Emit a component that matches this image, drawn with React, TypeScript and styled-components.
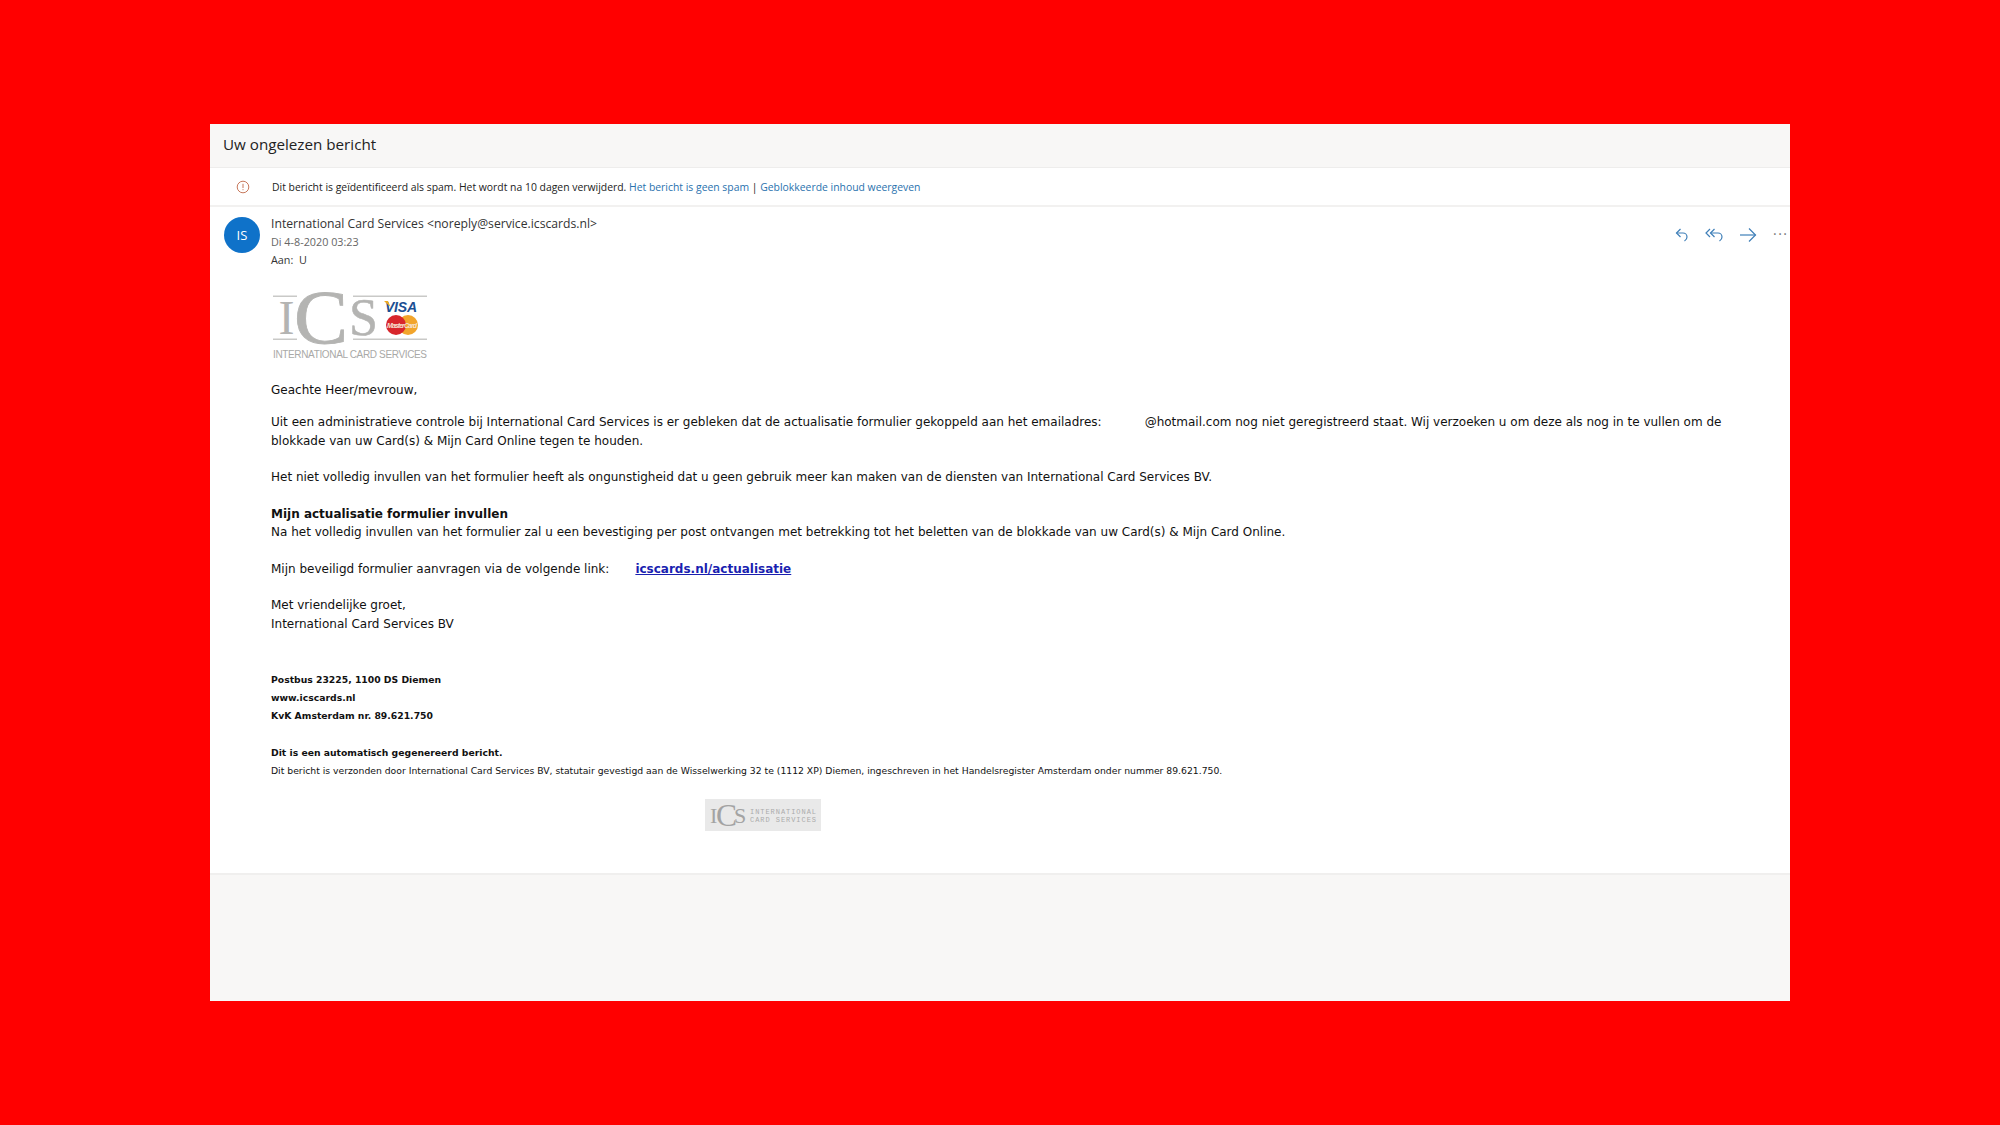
import styled, { createGlobalStyle } from "styled-components";

const GlobalStyle = createGlobalStyle`
    html, body {
        margin: 0;
        padding: 0;
        background: #ff0000;
    }
`

const UI_FONT = `"Open Sans", "Noto Sans", "Liberation Sans", sans-serif`;
const MAIL_FONT = `"DejaVu Sans", Verdana, sans-serif`;

function IcsLogo() {
    return (
        <svg width="160" height="74" viewBox="0 0 160 74">
            <rect x="2" y="6.5" width="24" height="1.5" fill="#c9c9c7" />
            <rect x="82" y="6.5" width="74" height="1.5" fill="#c9c9c7" />
            <rect x="2" y="49.5" width="24" height="1.5" fill="#c9c9c7" />
            <rect x="82" y="49.5" width="74" height="1.5" fill="#c9c9c7" />
            <text x="7.5" y="45" fontFamily="Liberation Serif, serif" fontSize="48" fill="#b4b4b2">I</text>
            <text x="23" y="54" fontFamily="Liberation Serif, serif" fontSize="76" fill="#b4b4b2" stroke="#b4b4b2" strokeWidth="0.8" textLength="54" lengthAdjust="spacingAndGlyphs">C</text>
            <text x="78" y="46" fontFamily="Liberation Serif, serif" fontSize="52" fill="#b4b4b2" stroke="#b4b4b2" strokeWidth="0.5">S</text>
            <text x="114" y="23" fontFamily="Liberation Sans, sans-serif" fontSize="14" fontWeight="700" fontStyle="italic" fill="#1b4f93" textLength="32">VISA</text>
            <path d="M113 12 l4 0 l2.5 6 z" fill="#eea91f" />
            <circle cx="137" cy="36" r="10" fill="#f2a52c" />
            <circle cx="125" cy="36" r="10" fill="#d8262c" />
            <text x="131" y="38.5" fontFamily="Liberation Sans, sans-serif" fontSize="7" fontWeight="700" fontStyle="italic" fill="#f6e2d0" textAnchor="middle" textLength="30">MasterCard</text>
            <text x="2" y="69" fontFamily="Liberation Sans, sans-serif" fontSize="10" fill="#a9a9a7" textLength="154">INTERNATIONAL CARD SERVICES</text>
        </svg>
    );
}

function SmallIcsLogo() {
    return (
        <svg width="116" height="32" viewBox="0 0 116 32">
            <text x="5" y="24" fontFamily="Liberation Serif, serif" fontSize="22" fill="#a3a3a3">I</text>
            <text x="11" y="27" fontFamily="Liberation Serif, serif" fontSize="32" fill="#a3a3a3" textLength="21" lengthAdjust="spacingAndGlyphs">C</text>
            <text x="29" y="24" fontFamily="Liberation Serif, serif" fontSize="22" fill="#a3a3a3">S</text>
            <text x="45" y="14.5" fontFamily="Liberation Mono, monospace" fontSize="7" fill="#ababab" textLength="66">INTERNATIONAL</text>
            <text x="45" y="22.5" fontFamily="Liberation Mono, monospace" fontSize="7" fill="#ababab" textLength="66">CARD SERVICES</text>
        </svg>
    );
}

function ReplyIcon() {
    return (
        <svg width="22" height="22" viewBox="0 0 22 22" fill="none" stroke="#3f7fb8" strokeWidth="1.2">
            <path d="M9.5 5 L5.5 9 L9.5 13" />
            <path d="M5.5 9 H12 a4 4 0 0 1 4 4 c0 2-1 3-2.5 4" />
        </svg>
    );
}

function ReplyAllIcon() {
    return (
        <svg width="22" height="22" viewBox="0 0 22 22" fill="none" stroke="#3f7fb8" strokeWidth="1.2">
            <path d="M6 5 L2 9 L6 13" />
            <path d="M10.5 5 L6.5 9 L10.5 13" />
            <path d="M6.5 9 H14 a4 4 0 0 1 4 4 c0 2-1 3-2.5 4" />
        </svg>
    );
}

function ForwardIcon() {
    return (
        <svg width="22" height="22" viewBox="0 0 22 22" fill="none" stroke="#3f7fb8" strokeWidth="1.2">
            <path d="M3 11 H18.5" />
            <path d="M12 4.5 L18.5 11 L12 17.5" />
        </svg>
    );
}

function InfoIcon() {
    return (
        <svg width="14" height="14" viewBox="0 0 14 14" fill="none" stroke="#c8795c" strokeWidth="1">
            <circle cx="7" cy="7" r="5.8" />
            <path d="M7 3.8 V8" />
            <path d="M7 9.2 V10.2" />
        </svg>
    );
}

export default function App() {
    return (
        <>
            <GlobalStyle />
            <PageStyled>
                <CardStyled>
                    <SubjectBarStyled>Uw ongelezen bericht</SubjectBarStyled>
                    <SpamBarStyled>
                        <SpamIconStyled><InfoIcon /></SpamIconStyled>
                        <span>
                            Dit bericht is geïdentificeerd als spam. Het wordt na 10 dagen verwijderd.{" "}
                            <SpamLinkStyled>Het bericht is geen spam</SpamLinkStyled> | <SpamLinkStyled>Geblokkeerde inhoud weergeven</SpamLinkStyled>
                        </span>
                    </SpamBarStyled>
                    <MessageStyled>
                        <SenderRowStyled>
                            <AvatarStyled>IS</AvatarStyled>
                            <SenderInfoStyled>
                                <SenderNameStyled>International Card Services &lt;noreply@service.icscards.nl&gt;</SenderNameStyled>
                                <SentDateStyled>Di 4-8-2020 03:23</SentDateStyled>
                                <RecipientStyled>Aan:&nbsp; U</RecipientStyled>
                            </SenderInfoStyled>
                            <ActionsStyled>
                                <ReplyIcon />
                                <ReplyAllIcon />
                                <ForwardIcon />
                                <MoreStyled>···</MoreStyled>
                            </ActionsStyled>
                        </SenderRowStyled>
                        <BodyStyled>
                            <LogoWrapperStyled><IcsLogo /></LogoWrapperStyled>
                            <ParagraphStyled $gap={14}>Geachte Heer/mevrouw,</ParagraphStyled>
                            <ParagraphStyled>
                                Uit een administratieve controle bij International Card Services is er gebleken dat de actualisatie formulier gekoppeld aan het emailadres:
                                <RedactedStyled />@hotmail.com nog niet geregistreerd staat. Wij verzoeken u om deze als nog in te vullen om de blokkade van uw Card(s) &amp; Mijn Card Online tegen te houden.
                            </ParagraphStyled>
                            <ParagraphStyled>Het niet volledig invullen van het formulier heeft als ongunstigheid dat u geen gebruik meer kan maken van de diensten van International Card Services BV.</ParagraphStyled>
                            <ParagraphStyled>
                                <b>Mijn actualisatie formulier invullen</b><br />
                                Na het volledig invullen van het formulier zal u een bevestiging per post ontvangen met betrekking tot het beletten van de blokkade van uw Card(s) &amp; Mijn Card Online.
                            </ParagraphStyled>
                            <ParagraphStyled>
                                Mijn beveiligd formulier aanvragen via de volgende link:
                                <MailLinkStyled>icscards.nl/actualisatie</MailLinkStyled>
                            </ParagraphStyled>
                            <ParagraphStyled $gap={38}>
                                Met vriendelijke groet,<br />
                                International Card Services BV
                            </ParagraphStyled>
                            <FinePrintStyled $gap={18}>
                                <b>Postbus 23225, 1100 DS Diemen</b><br />
                                <b>www.icscards.nl</b><br />
                                <b>KvK Amsterdam nr. 89.621.750</b>
                            </FinePrintStyled>
                            <FinePrintStyled $gap={19}>
                                <b>Dit is een automatisch gegenereerd bericht.</b><br />
                                Dit bericht is verzonden door International Card Services BV, statutair gevestigd aan de Wisselwerking 32 te (1112 XP) Diemen, ingeschreven in het Handelsregister Amsterdam onder nummer 89.621.750.
                            </FinePrintStyled>
                            <FooterLogoStyled><SmallIcsLogo /></FooterLogoStyled>
                        </BodyStyled>
                    </MessageStyled>
                    <BottomAreaStyled />
                </CardStyled>
            </PageStyled>
        </>
    );
}

const PageStyled = styled.div`
    box-sizing: border-box;
    width: 2000px;
    height: 1125px;
    padding: 124px 210px;
    overflow: hidden;
`

const CardStyled = styled.div`
    display: flex;
    flex-direction: column;
    height: 877px;
    background: #fff;
`

const SubjectBarStyled = styled.div`
    display: flex;
    align-items: center;
    box-sizing: border-box;
    height: 44px;
    padding: 0 0 3px 13px;
    background: #f8f7f6;
    border-bottom: 1px solid #eeedec;
    font-family: ${UI_FONT};
    font-size: 15.2px;
    color: #222;
`

const SpamBarStyled = styled.div`
    display: flex;
    align-items: center;
    height: 37px;
    border-bottom: 2px solid #f2f1f0;
    font-family: ${UI_FONT};
    font-size: 10.4px;
    color: #222;
`

const SpamIconStyled = styled.div`
    display: flex;
    justify-content: center;
    width: 58px;
    padding-left: 4px;
`

const SpamLinkStyled = styled.span`
    color: #2a72ae;
`

const MessageStyled = styled.div`
    flex: 1;
    border-bottom: 2px solid #f0efee;
`

const SenderRowStyled = styled.div`
    display: flex;
    padding: 8px 0 0 14px;
`

const AvatarStyled = styled.div`
    display: flex;
    align-items: center;
    justify-content: center;
    width: 36px;
    height: 36px;
    margin-top: 2px;
    border-radius: 50%;
    background: #0f72c9;
    color: #fff;
    font-family: ${UI_FONT};
    font-size: 13px;
`

const SenderInfoStyled = styled.div`
    flex: 1;
    margin-left: 11px;
    font-family: ${UI_FONT};
    line-height: 18px;
`

const SenderNameStyled = styled.div`
    font-size: 12.2px;
    color: #333;
`

const SentDateStyled = styled.div`
    font-size: 10.8px;
    color: #666;
`

const RecipientStyled = styled.div`
    font-size: 10.8px;
    color: #333;
`

const ActionsStyled = styled.div`
    display: flex;
    align-items: flex-start;
    gap: 11px;
    padding-top: 9px;
`

const MoreStyled = styled.div`
    width: 17px;
    margin-left: 3px;
    color: #777;
    font-family: ${UI_FONT};
    font-size: 14px;
    line-height: 20px;
    letter-spacing: 1.5px;
`

const BodyStyled = styled.div`
    padding: 20px 60px 0 61px;
    font-family: ${MAIL_FONT};
    font-size: 12px;
    line-height: 18.3px;
    color: #111;
`

const LogoWrapperStyled = styled.div`
    height: 92px;
`

const ParagraphStyled = styled.p<{ $gap?: number }>`
    margin: 0 0 ${({ $gap }) => $gap ?? 18.3}px;
`

const RedactedStyled = styled.span`
    display: inline-block;
    width: 43px;
`

const MailLinkStyled = styled.a`
    margin-left: 26px;
    color: #1a1fb0;
    font-weight: 700;
    text-decoration: underline;
`

const FinePrintStyled = styled.p<{ $gap: number }>`
    margin: 0 0 ${({ $gap }) => $gap}px;
    font-size: 9.25px;
`

const FooterLogoStyled = styled.div`
    width: 116px;
    height: 32px;
    margin-left: 434px;
    background: #e9e9e9;
`

const BottomAreaStyled = styled.div`
    height: 126px;
    background: #f8f7f6;
`
